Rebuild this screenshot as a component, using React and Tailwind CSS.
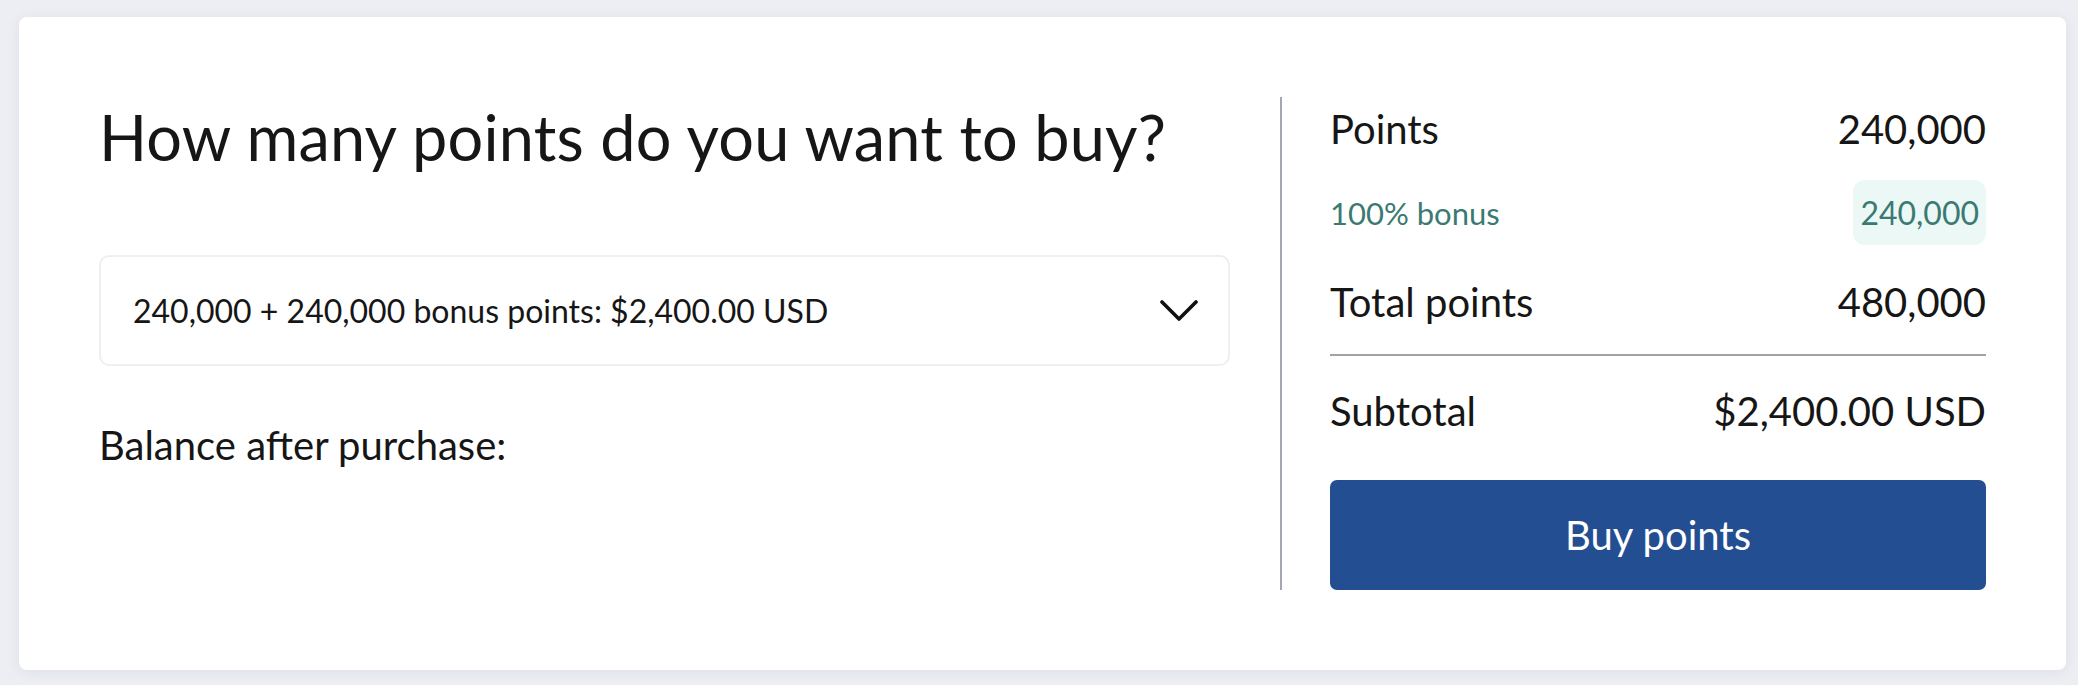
export default function App() {
  const font = { fontFamily: 'Lato, "Open Sans", sans-serif' };
  return (
    <div
      className="w-[2078px] h-[685px] bg-[#eceef3] pt-[17px] pl-[19px] pr-[12px] pb-[15px]"
      style={font}
    >
      <div className="w-[2047px] h-[653px] bg-white rounded-[8px] shadow-[0_2px_14px_rgba(30,40,80,0.07)] p-[80px] flex text-[#161616]">
        {/* Left column */}
        <div className="flex-1 flex flex-col">
          <h1 className="text-[63px] leading-[77px] font-normal tracking-[0.2px] mt-[1px]">
            How many points do you want to buy?
          </h1>
          <div className="mt-[80px] h-[111px] border-[2px] border-[#efefef] rounded-[10px] flex items-center justify-between pl-[32px] pr-[30px]">
            <span className="text-[32px] leading-[38px]">
              240,000 + 240,000 bonus points: $2,400.00 USD
            </span>
            <svg width="38" height="22" viewBox="0 0 38 22" fill="none">
              <polyline
                points="2,2 19,19 36,2"
                stroke="#111"
                strokeWidth="3.6"
                strokeLinecap="round"
                strokeLinejoin="round"
              />
            </svg>
          </div>
          <p className="mt-[55px] text-[40px] leading-[48px]">Balance after purchase:</p>
        </div>

        {/* Divider */}
        <div className="ml-[50px] mr-[48px] w-[2px] bg-[#a3a8b0]" />

        {/* Right column */}
        <div className="w-[656px] flex flex-col">
          <div className="h-[64px] flex items-center justify-between text-[40px]">
            <span>Points</span>
            <span>240,000</span>
          </div>
          <div className="mt-[19px] h-[65px] flex items-center justify-between text-[31px] text-[#3b7a72]">
            <span className="mt-[2px]">100% bonus</span>
            <span className="h-[65px] px-[7px] flex items-center bg-[#ebf8f6] rounded-[12px] text-[32px]">
              240,000
            </span>
          </div>
          <div className="mt-[25px] h-[64px] flex items-center justify-between text-[40px]">
            <span>Total points</span>
            <span>480,000</span>
          </div>
          <div className="mt-[20px] h-[2px] bg-[#9ea3a8]" />
          <div className="mt-[23px] h-[64px] flex items-center justify-between text-[40px]">
            <span>Subtotal</span>
            <span>$2,400.00 USD</span>
          </div>
          <button className="mt-[37px] h-[110px] w-full rounded-[7px] bg-[#234e91] text-white text-[40px] flex items-center justify-center">
            Buy points
          </button>
        </div>
      </div>
    </div>
  );
}
